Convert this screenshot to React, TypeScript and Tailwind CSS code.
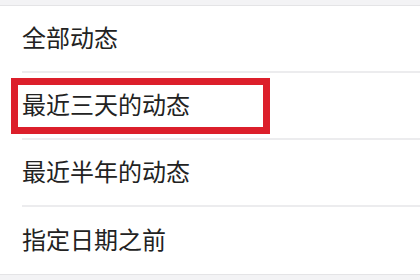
const options = ['全部动态', '最近三天的动态', '最近半年的动态', '指定日期之前'];

export default function App() {
  return (
    <div
      className="w-[420px] h-[280px] flex flex-col bg-white overflow-hidden"
      style={{ fontFamily: '"Noto Sans CJK SC", "Noto Sans", sans-serif' }}
    >
      <div className="h-[6px] shrink-0 bg-[#f3f3f5] border-b border-[#e4e4e6]" />
      {options.map((label, idx) => (
        <div key={idx} className="relative h-[67px] shrink-0 pl-[22px]">
          <div
            className={`h-full flex items-center ${idx < options.length - 1 ? 'border-b-2 border-[#ececee]' : ''}`}
          >
            <span className="text-[24px] leading-none text-[#222] -mt-[4px]">{label}</span>
          </div>
          {idx === 1 && (
            <div className="absolute left-[11px] top-[5px] w-[259px] h-[56px] border-[7px] border-[#dc1f2b]" />
          )}
        </div>
      ))}
      <div className="flex-1 bg-[#f3f3f5] border-t border-[#e4e4e6]" />
    </div>
  );
}
